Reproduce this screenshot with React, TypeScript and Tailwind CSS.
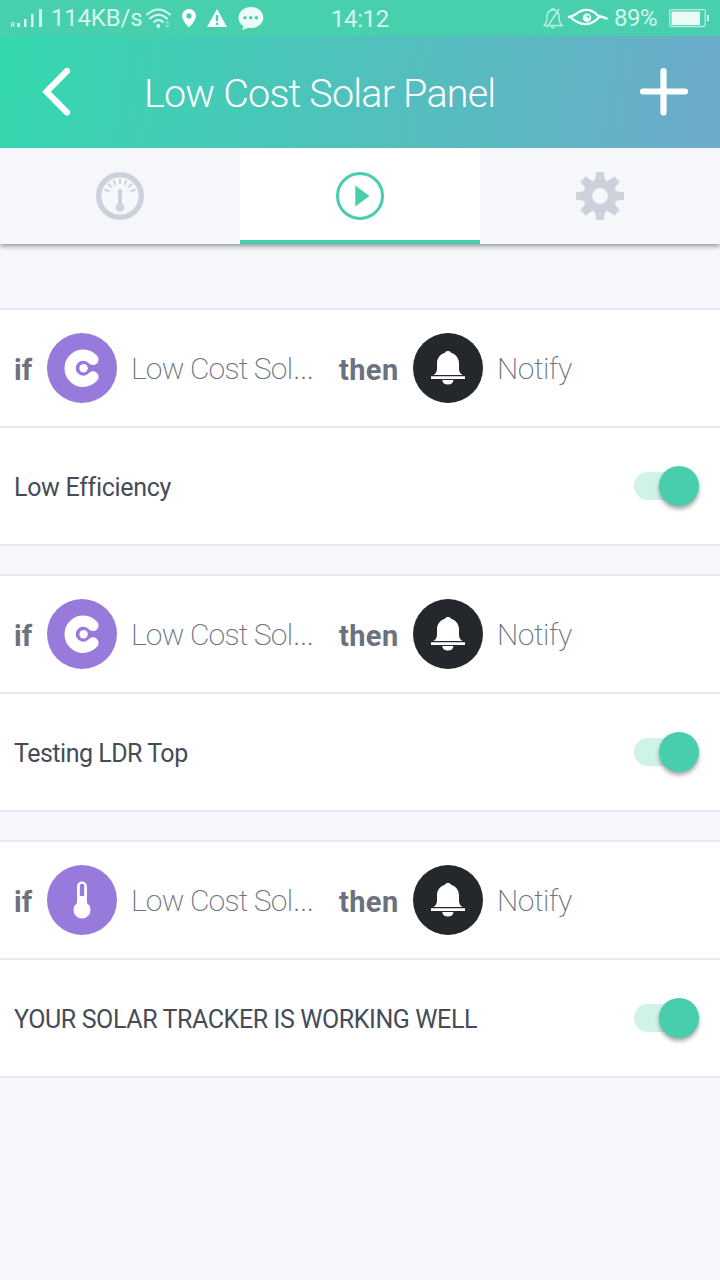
import type { ReactNode } from "react";

function StatusBar() {
  return (
    <div className="flex h-9 shrink-0 items-center bg-[#48d0ae] font-['Roboto',sans-serif] text-2xl leading-9 text-[#d5f6ec]">
      <svg className="h-9 w-[51px] shrink-0" viewBox="0 0 51 36" fill="#d5f6ec">
        <path d="M11.5 27v-4.500h1.800a1.200 1.200 0 0 1 0 2.400h-1.800m1.500 0L14.500 27" fill="none" stroke="#d5f6ec" strokeWidth="1" />
        <path d="M17 23h3v4h-3zM24 19h2.500v8H24zM31 14h2.500v13H31zM39 9h3v18h-3z" />
      </svg>
      <span className="w-[95px] whitespace-nowrap tracking-[-0.2px]">114KB/s</span>
      <svg className="h-9 w-[120px] shrink-0" viewBox="146 0 120 36" fill="#fff">
        <g fill="none" stroke="#d5f6ec" strokeWidth="2" strokeLinecap="round">
          <path d="M147 14.500q11.500 -10 23 0M150 18.500q8.500-7.500 17 0M154 22q4.500-4 9 0" />
        </g>
        <circle cx="158.300" cy="26" r="1.900" fill="#d5f6ec" />
        <path d="M167.500 20.500l2.800 3h-5.600zM167.500 28l2.800-3h-5.600z" fill="#8be3cc" />
        <path fillRule="evenodd" d="M189 9a7 7 0 0 0-7 7c0 4.500 7 11.500 7 11.500s7-7 7-11.500a7 7 0 0 0-7-7zm0 4.300a2.600 2.600 0 1 1 0 5.200 2.600 2.600 0 0 1 0-5.200z" />
        <path fillRule="evenodd" d="M217 9L207 27h20zM215.800 15h2.500v6h-2.500zm0 7.600h2.500V25h-2.500z" />
        <path d="M251 7c-7 0-12.500 4.700-12.500 10.600 0 3.700 1.800 6.700 5 8.600-.1 1.500-.8 2.700-1.700 3.600 2.500-.2 4.500-1 6-2 1 .2 2.100.3 3.200.3 7 0 12.300-4.600 12.300-10.500S258 7 251 7z" fill="#edfbf7" />
        <g fill="#48d0ae"><circle cx="245" cy="17.700" r="1.700" /><circle cx="250.700" cy="17.700" r="1.700" /><circle cx="256.400" cy="17.700" r="1.700" /></g>
      </svg>
      <span className="ml-[65px] w-[210px] whitespace-nowrap pt-[2px] tracking-[-0.4px]">14:12</span>
      <svg className="h-9 w-[73px] shrink-0" viewBox="541 0 73 36" fill="none">
        <path d="M544 25.500h18c-2.500-2-3-4-3-8.500 0-4-2-7-6-7s-6 3-6 7c0 4.500-.5 6.500-3 8.500zM551.500 10c0-1.700 3-1.700 3 0M551 27.500h4M547 27.500L559 9" stroke="#b5eedf" strokeWidth="1.500" />
        <path d="M568 17.200c3-.3 5.500-1.200 8-3.200 7-5.500 15-5.500 21 .8 2.500 2 6 2 10.500 4.200M571 17.800c5 4 9 6.400 15 6.400s10-3.400 14-7.900" stroke="#fff" strokeWidth="2.300" />
        <circle cx="587" cy="17.800" r="4.200" fill="#fff" /><path d="M586.500 16.300h2.200v2.200" stroke="#48d0ae" strokeWidth="1.400" />
      </svg>
      <span className="w-[55px] whitespace-nowrap tracking-[-0.5px]">89%</span>
      <svg className="h-9 w-[45px] shrink-0" viewBox="669 0 45 36">
        <rect x="669.700" y="9.700" width="35.500" height="16.800" rx="1.500" fill="none" stroke="#b8eee0" strokeWidth="1.300" />
        <path d="M671.500 11.500h28.500v13.500h-28.500z" fill="#edfbf7" />
        <path d="M707 15h2v6h-2z" fill="#d5f6ec" />
      </svg>
    </div>
  );
}

function Header() {
  return (
    <header className="relative z-20 flex h-28 shrink-0 bg-[linear-gradient(100deg,#34d8ae_0%,#50c1bc_50%,#6daacb_100%)] text-white">
      <svg className="h-28 w-[144px] shrink-0" viewBox="0 0 144 112" fill="none" stroke="#fff" strokeWidth="6.200" strokeLinecap="round">
        <path d="M67 35L46.500 55.700 67 76.500" strokeLinejoin="miter" />
      </svg>
      <h1 className="w-[496px] whitespace-nowrap pt-[2px] text-[39.500px] font-[350] leading-[112px] tracking-[-0.800px]">Low Cost Solar Panel</h1>
      <svg className="h-28 w-20 shrink-0" viewBox="640 0 80 112" stroke="#fff" strokeWidth="6.200" strokeLinecap="round">
        <path d="M643 55.500h42M663.500 35v41.500" />
      </svg>
    </header>
  );
}

const ticks = [-67, -44, -22, 0, 22, 44, 67];
const teeth = [0, 45, 90, 135, 180, 225, 270, 315];

function Tabs() {
  return (
    <nav className="relative z-10 grid h-24 shrink-0 grid-cols-3 bg-[#f5f7fb] shadow-[0_2px_5px_rgba(0,0,0,0.42)]">
      <div className="flex items-center justify-center">
        <svg className="size-12" viewBox="0 0 48 48" fill="none" stroke="#ccd1db">
          <circle cx="24" cy="24" r="21.300" strokeWidth="5.400" />
          {ticks.map((a) => (
            <path key={a} d="M24 7v5" strokeWidth="2" stroke="#c8d5d9" transform={`rotate(${a} 24 24)`} />
          ))}
          <path d="M24 19v15" strokeWidth="4" strokeLinecap="round" />
          <circle cx="24" cy="35.300" r="4.300" fill="#ccd1db" stroke="none" />
        </svg>
      </div>
      <div className="flex items-center justify-center border-b-4 border-[#48cead] bg-white pt-1">
        <svg className="size-12" viewBox="0 0 48 48">
          <circle cx="24" cy="24" r="22.500" fill="none" stroke="#48cead" strokeWidth="3" />
          <path d="M19.300 13.500v21L33.500 24z" fill="#48cead" />
        </svg>
      </div>
      <div className="flex items-center justify-center">
        <svg className="size-12" viewBox="0 0 48 48" fill="#ccd1db">
          {teeth.map((a) => (
            <path key={a} d="M20.200 0h7.600l1.500 11h-10.600z" transform={`rotate(${a} 24 24)`} />
          ))}
          <circle cx="24" cy="24" r="12.300" fill="none" stroke="#ccd1db" strokeWidth="8.800" />
        </svg>
      </div>
    </nav>
  );
}

function Round({ dark, children }: { dark?: boolean; children: ReactNode }) {
  return (
    <svg className="size-[70px] shrink-0" viewBox="0 0 70 70" fill="#fff">
      <circle cx="35" cy="35" r="35" fill={dark ? "#24282d" : "#977adb"} />
      {children}
    </svg>
  );
}

function Bell() {
  return (
    <Round dark>
      <path d="M35 18c-1.500 0-2.500.7-3.100 1.700-5 1.500-7.900 5.500-7.900 10.700v5c0 3-1 5-3.500 6.600h29C47 40.400 46 38.400 46 35.400v-5c0-5.200-3-9.200-7.900-10.700C37.500 18.700 36.500 18 35 18zM18 43.300h34V46H18zM29.200 47h11.300a5.700 5.200 0 0 1-11.300 0z" />
    </Round>
  );
}

function Controller() {
  return (
    <Round>
      <path d="M46 26.500a13.100 13.100 0 1 0 0 17.400" fill="none" stroke="#fff" strokeWidth="11.200" strokeLinecap="round" />
      <circle cx="36.600" cy="35.200" r="4.200" />
    </Round>
  );
}

function Thermometer() {
  return (
    <Round>
      <path fillRule="evenodd" d="M30 21.500a5 5 0 0 1 10 0v16.600a8.500 8.500 0 1 1-10 0zM32.800 21v10h4.400V21a2.200 2.200 0 0 0-4.400 0z" />
    </Round>
  );
}

function Toggle() {
  return (
    <div role="switch" aria-checked="true" className="mr-[21px] flex h-7 w-[65px] shrink-0 items-center justify-end">
      <div className="h-7 w-11 shrink-0 rounded-full bg-[#cff3e8]" />
      <div className="-ml-[19px] size-10 shrink-0 rounded-full bg-[#48cead] shadow-[0_3px_4px_rgba(0,0,0,0.35)]" />
    </div>
  );
}

function Rule({ icon, label, labelStyle }: { icon: ReactNode; label: string; labelStyle: string }) {
  return (
    <section className="h-[238px] shrink-0 border-y-2 border-[#e6e9ed] bg-white">
      <div className="flex h-[118px] items-center border-b-2 border-[#e6e9ed] pl-[14px] text-[#6b727e]">
        <span className="w-[33px] pt-[3px] text-[29px] font-bold leading-10">if</span>
        {icon}
        <span className="ml-[14px] w-[208px] whitespace-nowrap pt-[2px] text-[30px] font-[200] leading-10 tracking-[-0.800px]">
          Low Cost Sol<span className="text-[36px] leading-none">…</span>
        </span>
        <span className="w-[74px] whitespace-nowrap pt-[3px] text-[29px] font-bold leading-10 tracking-[0.400px]">then</span>
        <Bell />
        <span className="ml-[14px] whitespace-nowrap pt-[2px] text-[30px] font-[200] leading-10 tracking-[-0.500px]">Notify</span>
      </div>
      <div className="flex h-[116px] items-center justify-between pl-[14px]">
        <span className={`whitespace-nowrap pt-[4px] text-[25px] text-[#464c57] ${labelStyle}`}>{label}</span>
        <Toggle />
      </div>
    </section>
  );
}

export default function App() {
  return (
    <div className="flex h-[1280px] w-[720px] flex-col overflow-hidden bg-[#f5f7fb] font-['Roboto','Noto_Sans',sans-serif]">
      <StatusBar />
      <Header />
      <Tabs />
      <main className="flex flex-col gap-7 pt-16">
        <Rule icon={<Controller />} label="Low Efficiency" labelStyle="tracking-[-0.3px]" />
        <Rule icon={<Controller />} label="Testing LDR Top" labelStyle="tracking-[-0.5px]" />
        <Rule icon={<Thermometer />} label="YOUR SOLAR TRACKER IS WORKING WELL" labelStyle="tracking-[-0.4px]" />
      </main>
    </div>
  );
}
